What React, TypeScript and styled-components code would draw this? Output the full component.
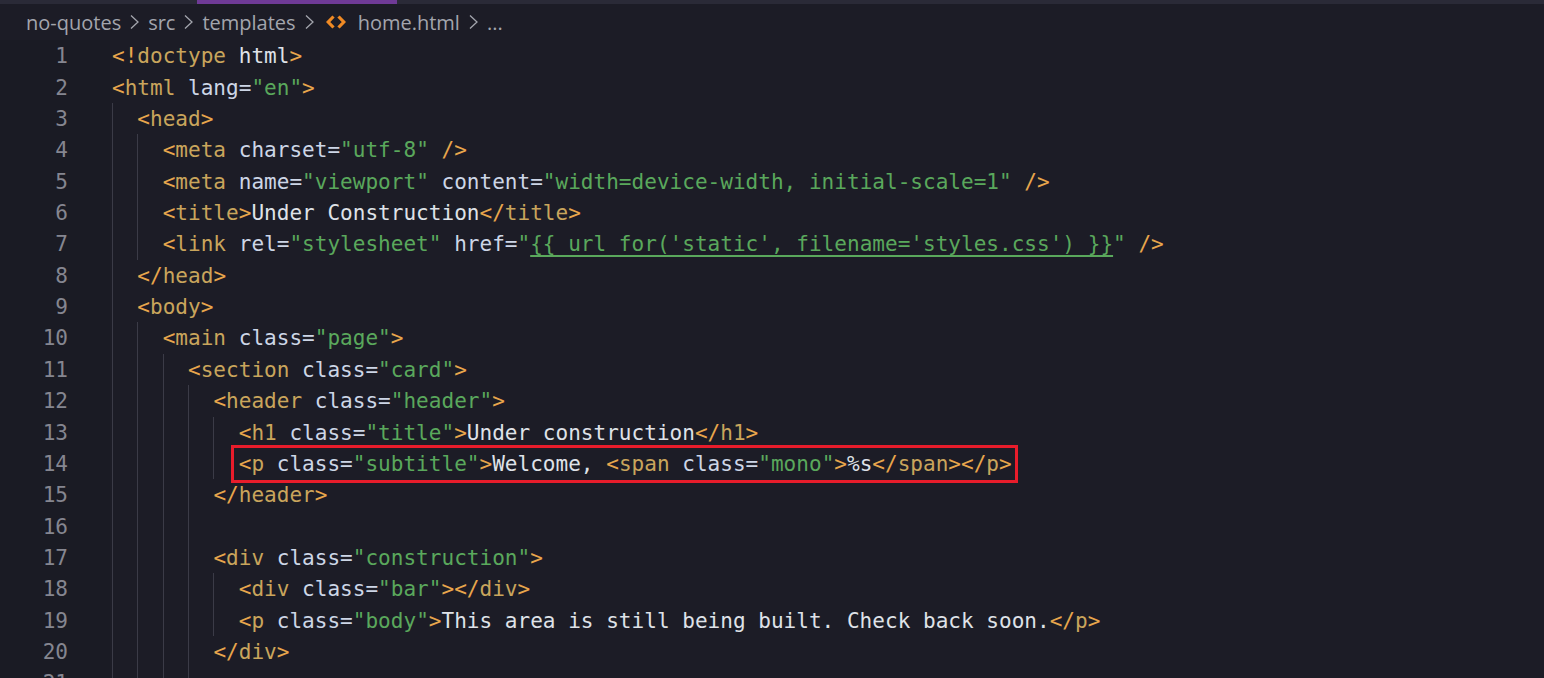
import React from "react";
import styled, { createGlobalStyle } from "styled-components";

const GlobalStyle = createGlobalStyle`
  html, body { margin: 0; padding: 0; background: #1c1c26; overflow: hidden; }
`;

const Page = styled.div`
  width: 1544px;
  height: 678px;
  overflow: hidden;
  background: #1c1c26;
  display: flex;
  flex-direction: column;
`;

const TabStrip = styled.div`
  height: 4px;
  flex: none;
  background: #2a2a37;
  padding-left: 197px;
`;

const ActiveTab = styled.div`
  width: 200px;
  height: 4px;
  background: #6f3a96;
`;

const Breadcrumbs = styled.nav`
  height: 36.4px;
  flex: none;
  display: flex;
  align-items: center;
  padding: 0 0 0 26px;
  box-sizing: border-box;
  gap: 9px;
  font-family: "Open Sans", "Noto Sans", sans-serif;
  font-size: 20px;
  color: #a3a5ad;
`;

const Crumb = styled.span`
  white-space: nowrap;
`;

const Editor = styled.div`
  font-family: "DejaVu Sans Mono", monospace;
  font-size: 21.06px;
  color: #d4d8e0;
`;

const Row = styled.div`
  height: 31.35px;
  line-height: 31.35px;
  display: flex;
  white-space: pre;
`;

const LineNo = styled.span`
  width: 110px;
  padding-right: 42px;
  margin-right: 2px;
  box-sizing: border-box;
  flex: none;
  text-align: right;
  color: #858690;
  background: #1a1b24;
`;

const Guide = styled.span`
  width: 25.35px;
  flex: none;
  box-shadow: inset 1px 0 0 #3b3b47;
`;

const Code = styled.span`
  position: relative;
`;

const Highlighted = styled(Code)`
  &::after {
    content: "";
    position: absolute;
    left: -8px;
    right: -6px;
    top: -3px;
    bottom: -4px;
    border: 3px solid #e81c2b;
  }
`;

const P = styled.span`color: #e8a64c;`;
const T = styled.span`color: #c9a55c;`;
const A = styled.span`color: #cdd6e6;`;
const S = styled.span`color: #5aa85c;`;
const U = styled.span`
  color: #5aa85c;
  text-decoration: underline 2px;
  text-decoration-skip-ink: none;
  text-underline-offset: 4px;
`;
const X = styled.span`color: #dfe2e8;`;

const tag = (name: string) => (
  <>
    <P>&lt;</P>
    <T>{name}</T>
  </>
);
const close = (name: string) => (
  <>
    <P>&lt;/</P>
    <T>{name}</T>
    <P>&gt;</P>
  </>
);
const attr = (name: string, value: string) => (
  <>
    <A> {name}=</A>
    <S>"{value}"</S>
  </>
);
const gt = <P>&gt;</P>;
const selfEnd = <P> /&gt;</P>;

type Line = { guides: number; content?: React.ReactNode; boxed?: boolean };

const lines: Line[] = [
  { guides: 0, content: <><P>&lt;!</P><T>doctype</T><X> html</X><P>&gt;</P></> },
  { guides: 0, content: <>{tag("html")}{attr("lang", "en")}{gt}</> },
  { guides: 1, content: <>{tag("head")}{gt}</> },
  { guides: 2, content: <>{tag("meta")}{attr("charset", "utf-8")}{selfEnd}</> },
  { guides: 2, content: <>{tag("meta")}{attr("name", "viewport")}{attr("content", "width=device-width, initial-scale=1")}{selfEnd}</> },
  { guides: 2, content: <>{tag("title")}{gt}<X>Under Construction</X>{close("title")}</> },
  { guides: 2, content: <>{tag("link")}{attr("rel", "stylesheet")}<A> href=</A><S>"</S><U>{"{{ url_for('static', filename='styles.css') }}"}</U><S>"</S>{selfEnd}</> },
  { guides: 1, content: close("head") },
  { guides: 1, content: <>{tag("body")}{gt}</> },
  { guides: 2, content: <>{tag("main")}{attr("class", "page")}{gt}</> },
  { guides: 3, content: <>{tag("section")}{attr("class", "card")}{gt}</> },
  { guides: 4, content: <>{tag("header")}{attr("class", "header")}{gt}</> },
  { guides: 5, content: <>{tag("h1")}{attr("class", "title")}{gt}<X>Under construction</X>{close("h1")}</> },
  { guides: 5, boxed: true, content: <>{tag("p")}{attr("class", "subtitle")}{gt}<X>Welcome, </X>{tag("span")}{attr("class", "mono")}{gt}<X>%s</X>{close("span")}{close("p")}</> },
  { guides: 4, content: close("header") },
  { guides: 4 },
  { guides: 4, content: <>{tag("div")}{attr("class", "construction")}{gt}</> },
  { guides: 5, content: <>{tag("div")}{attr("class", "bar")}{gt}{close("div")}</> },
  { guides: 5, content: <>{tag("p")}{attr("class", "body")}{gt}<X>This area is still being built. Check back soon.</X>{close("p")}</> },
  { guides: 4, content: close("div") },
  { guides: 4 },
];

const ChevronIcon = styled.svg`
  flex: none;
  width: 9px;
  height: 16px;
`;

const Chevron = () => (
  <ChevronIcon viewBox="0 0 9 16" fill="none" stroke="#a3a5ad" strokeWidth="1.3">
    <path d="M1 1.5l7 6.5-7 6.5" />
  </ChevronIcon>
);

const FileIcon = styled.svg`
  flex: none;
  width: 20px;
  height: 14px;
  margin: 0 3px 0 3px;
`;

const HtmlIcon = () => (
  <FileIcon viewBox="0 0 20 14" fill="none" stroke="#f08a24" strokeWidth="3.2">
    <path d="M7.5 1.5L2.2 7l5.3 5.5M12.5 1.5L17.8 7l-5.3 5.5" />
  </FileIcon>
);

export default function App() {
  return (
    <Page>
      <GlobalStyle />
      <TabStrip>
        <ActiveTab />
      </TabStrip>
      <Breadcrumbs>
        <Crumb>no-quotes</Crumb>
        <Chevron />
        <Crumb>src</Crumb>
        <Chevron />
        <Crumb>templates</Crumb>
        <Chevron />
        <HtmlIcon />
        <Crumb>home.html</Crumb>
        <Chevron />
        <Crumb>...</Crumb>
      </Breadcrumbs>
      <Editor>
        {lines.map((line, i) => {
          const Body = line.boxed ? Highlighted : Code;
          return (
            <Row key={i}>
              <LineNo>{i + 1}</LineNo>
              {Array.from({ length: line.guides }, (_, g) => (
                <Guide key={g} />
              ))}
              {line.content && <Body>{line.content}</Body>}
            </Row>
          );
        })}
      </Editor>
    </Page>
  );
}
